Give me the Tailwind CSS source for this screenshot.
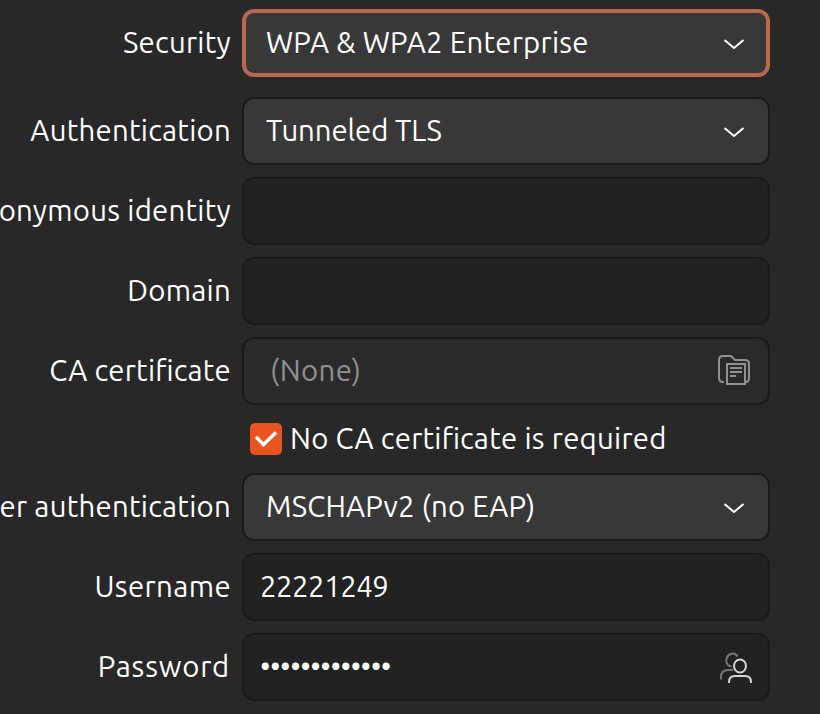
<!DOCTYPE html>
<html lang="en">
<head>
<meta charset="utf-8">
<title>Wi-Fi Security</title>
<script src="https://cdn.jsdelivr.net/npm/@tailwindcss/browser@4"></script>
</head>
<body class="w-[820px] h-[714px] overflow-hidden bg-[#282828] text-white font-['Ubuntu','Noto_Sans',sans-serif] text-[29.33px] leading-[40px] tracking-[0.27px] whitespace-nowrap">
<main class="flex flex-col gap-3 pt-[9px] w-[770px]">
  <div class="flex items-center h-[68px] gap-[11px] mb-2">
    <div class="w-[231px] flex justify-end shrink-0 pb-[1px]"><span>Security</span></div>
    <div class="flex-1 h-full flex items-center justify-between rounded-[12px] border-4 border-[#b7694f] bg-[#383838] pl-5 pr-5">
      <span class="pb-[1px]">WPA &amp; WPA2 Enterprise</span>
      <svg class="w-6 h-6" viewBox="0 0 24 24" fill="none" stroke="#fff" stroke-width="2"><path d="M2.5 9 12 17 21.500 9"/></svg>
    </div>
  </div>
  <div class="flex items-center h-[68px] gap-[11px]">
    <div class="w-[231px] flex justify-end shrink-0 pb-[1px]"><span>Authentication</span></div>
    <div class="flex-1 h-full flex items-center justify-between rounded-[12px] border-2 border-[#1a1a1a] bg-[#383838] pl-[22px] pr-[22px]">
      <span class="tracking-[-0.08px] pb-[1px]">Tunneled TLS</span>
      <svg class="w-6 h-6" viewBox="0 0 24 24" fill="none" stroke="#fff" stroke-width="2"><path d="M2.5 9 12 17 21.500 9"/></svg>
    </div>
  </div>
  <div class="flex items-center h-[68px] gap-[11px]">
    <div class="w-[231px] flex justify-end shrink-0 pb-[1px]"><span>onymous identity</span></div>
    <div class="flex-1 h-full rounded-[12px] border-2 border-[#1a1a1a] bg-[#222]"></div>
  </div>
  <div class="flex items-center h-[68px] gap-[11px]">
    <div class="w-[231px] flex justify-end shrink-0 pb-[1px]"><span>Domain</span></div>
    <div class="flex-1 h-full rounded-[12px] border-2 border-[#1a1a1a] bg-[#222]"></div>
  </div>
  <div class="flex items-center h-[68px] gap-[11px]">
    <div class="w-[231px] flex justify-end shrink-0 pb-[1px]"><span>CA certi<span class="tracking-normal">fi</span>cate</span></div>
    <div class="flex-1 h-full flex items-center justify-between rounded-[12px] border-2 border-[#1a1a1a] bg-[#2a2a2a] pl-[26px] pr-[18px]">
      <span class="text-[#919191] tracking-[0.4px] pb-[1px]">(None)</span>
      <svg class="w-8 h-8 -mt-0.5" viewBox="0 0 32 32" fill="none" stroke="#919191" stroke-width="2"><path d="M6 28H5Q1 28 1 24V6Q1 2 5 2H13L17 6H27Q31 6 31 10V24Q31 28 28 28"/><path d="M9 10H27V30H9Z"/><path d="M12 14H24M12 18H24M12 22H18"/></svg>
    </div>
  </div>
  <div class="flex items-center h-11 gap-2 pl-[250px]">
    <svg class="w-8 h-8" viewBox="0 0 32 32"><rect width="32" height="32" rx="5" fill="#e95420"/><path d="M6 14 13.500 21.500 26 9.500" fill="none" stroke="#fff" stroke-width="3.500"/></svg>
    <span class="pb-[1px]">No CA certi<span class="tracking-normal">fi</span>cate is required</span>
  </div>
  <div class="flex items-center h-[68px] gap-[11px]">
    <div class="w-[231px] flex justify-end shrink-0 pb-[1px]"><span>er authentication</span></div>
    <div class="flex-1 h-full flex items-center justify-between rounded-[12px] border-2 border-[#1a1a1a] bg-[#383838] pl-[22px] pr-[22px]">
      <span class="tracking-[0.2px] pb-[1px]">MSCHAPv2 (no EAP)</span>
      <svg class="w-6 h-6" viewBox="0 0 24 24" fill="none" stroke="#fff" stroke-width="2"><path d="M2.5 9 12 17 21.500 9"/></svg>
    </div>
  </div>
  <div class="flex items-center h-[68px] gap-[11px]">
    <div class="w-[231px] flex justify-end shrink-0 pb-[1px]"><span class="tracking-[0.4px]">Username</span></div>
    <div class="flex-1 h-full flex items-center rounded-[12px] border-2 border-[#1a1a1a] bg-[#222] pl-4"><span class="tracking-[-0.5px] pb-[1px]">22221249</span></div>
  </div>
  <div class="flex items-center h-[68px] gap-[11px]">
    <div class="w-[231px] flex justify-end shrink-0 pb-[1px] pr-[1px]"><span class="tracking-[0.8px]">Password</span></div>
    <div class="flex-1 h-full flex items-center justify-between rounded-[12px] border-2 border-[#1a1a1a] bg-[#222] pl-4 pr-4">
      <span class="tracking-[-0.5px] pb-[1px]">•••••••••••••</span>
      <svg class="w-8 h-8" viewBox="0 0 32 32" fill="none" stroke-width="2"><g stroke="#777"><path d="M17.500 5.500C16 2.500 13 2 10.500 3C6 5 5 11 8 14Q9.500 15.500 11.500 15.500M1 28.500V26Q1 19 8 19H13"/></g><g stroke="#d6d6d6"><ellipse cx="20" cy="15" rx="6" ry="6.500"/><path d="M9 32V31Q9 25 15 25H25Q31 25 31 31V32"/></g></svg>
    </div>
  </div>
</main>
</body>
</html>
